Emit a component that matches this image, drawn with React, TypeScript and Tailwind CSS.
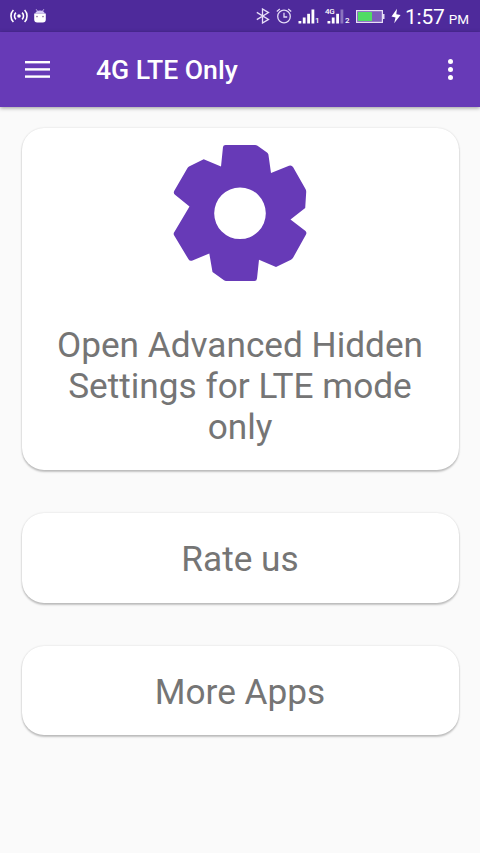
import React from "react";

const RadioIcon = () => (
  <svg width="18" height="14" viewBox="0 0 18 14" fill="none" stroke="#fff" strokeWidth="1.6">
    <circle cx="9" cy="7" r="1.8" fill="#fff" stroke="none" />
    <path d="M5.9 3.6a4.8 4.8 0 0 0 0 6.8M12.1 3.6a4.8 4.8 0 0 1 0 6.8" />
    <path d="M3.4 1a8.6 8.6 0 0 0 0 12M14.6 1a8.6 8.6 0 0 1 0 12" />
  </svg>
);

const RobotIcon = () => (
  <svg width="12" height="14" viewBox="0 0 12 14">
    <path d="M2.2.3l1.4 2M9.8.3l-1.4 2" stroke="#d9cdf3" strokeWidth="0.9" />
    <path d="M1.2 4.6C1.6 2.6 3.6 1.6 6 1.6s4.4 1 4.8 3z" fill="#d3c8f5" />
    <path d="M.2 4.6h11.6v6a3 3 0 0 1-3 3H3.2a3 3 0 0 1-3-3z" fill="#fff" />
    <circle cx="3" cy="7.6" r="0.8" fill="#8a6a9c" />
    <circle cx="9" cy="7.6" r="0.8" fill="#8a6a9c" />
  </svg>
);

const BluetoothIcon = () => (
  <svg width="14" height="16" viewBox="0 0 14 16" fill="none" stroke="#e6def7" strokeWidth="1.3">
    <path d="M.8 4.4l11.7 7L6.5 15V1l6 3.6-11.7 7" />
  </svg>
);

const AlarmIcon = () => (
  <svg width="16" height="16" viewBox="0 0 16 16" fill="none" stroke="#e2d9f5" strokeWidth="1.3">
    <circle cx="8" cy="8.5" r="6.3" />
    <path d="M8 4.8v4.2h3.2M.8 3.5L3.8 1M15.2 3.5L12.2 1" />
  </svg>
);

const SignalIcon = ({ weak }: { weak?: boolean }) => (
  <svg width="17" height="15" viewBox="0 0 17 15" fill="#fff">
    <rect x="0.5" y="12" width="2.8" height="2.5" />
    <rect x="4.8" y="8.5" width="2.8" height="6" />
    <rect x="9.2" y="4.8" width="2.8" height="9.7" />
    <rect x="13.5" y="0.5" width="2.8" height="14" opacity={weak ? 0.35 : 1} />
  </svg>
);

const BatteryIcon = () => (
  <svg width="29" height="13" viewBox="0 0 29 13">
    <rect x="0.6" y="0.6" width="25.8" height="11.8" fill="#7d5cbb" stroke="#e6def5" strokeWidth="1.2" />
    <rect x="2" y="2" width="14" height="9" fill="#4fdc64" />
    <rect x="26.5" y="4" width="2" height="5" fill="#e6def5" />
  </svg>
);

const BoltIcon = () => (
  <svg width="10" height="16" viewBox="0 0 10 16" fill="#fff">
    <path d="M6 .8L.5 8.6l4 .8L3.2 15.2 9.6 7l-4.3-.7z" />
  </svg>
);

const MenuIcon = () => (
  <svg width="25" height="19" viewBox="0 0 25 19" fill="#fff">
    <rect y="1" width="25" height="2.4" />
    <rect y="8.2" width="25" height="2.4" />
    <rect y="15.4" width="25" height="2.4" />
  </svg>
);

const StatusBar = () => (
  <div className="flex h-8 items-center bg-[#4e2a9b] text-white">
    <div className="flex items-center gap-[6px] pl-[9.5px]">
      <RadioIcon />
      <RobotIcon />
    </div>
    <div className="ml-auto flex items-center pr-[11px]">
      <BluetoothIcon />
      <div className="ml-[6px]">
        <AlarmIcon />
      </div>
      <div className="ml-[6px] flex items-end">
        <SignalIcon />
        <span className="w-[6px] text-[8px] font-medium leading-[7px]">1</span>
      </div>
      <div className="relative ml-[6px] flex items-end">
        <SignalIcon weak />
        <span className="ml-px w-[5px] text-[8px] font-medium leading-[7px]">2</span>
        <span className="absolute -left-[2px] -top-px text-[8px] font-medium leading-[8px] tracking-[-0.3px]">4G</span>
      </div>
      <div className="ml-[6px]">
        <BatteryIcon />
      </div>
      <div className="ml-[6px]">
        <BoltIcon />
      </div>
      <div className="ml-[4px] flex items-baseline gap-[4px] pt-[2px]">
        <span className="text-[21px] leading-none tracking-[-0.2px]">1:57</span>
        <span className="text-[13.5px] leading-none">PM</span>
      </div>
    </div>
  </div>
);

const AppBar = () => (
  <header className="relative flex h-[75px] items-center bg-[#673ab7] pl-[25px] pr-[27px] text-white shadow-[0_1px_4px_rgba(0,0,0,0.4)]">
    <button aria-label="Open menu">
      <MenuIcon />
    </button>
    <h1 className="ml-[46px] pt-[2px] text-[26.6px] font-medium leading-none">4G LTE Only</h1>
    <button aria-label="More options" className="ml-auto flex flex-col gap-[2.5px]">
      <span className="size-[5.5px] rounded-full bg-white" />
      <span className="size-[5.5px] rounded-full bg-white" />
      <span className="size-[5.5px] rounded-full bg-white" />
    </button>
  </header>
);

const GearIcon = () => (
  <svg width="160" height="160" viewBox="0 0 160 160" fill="#673ab7" fillRule="evenodd">
    <path d="M65.5 15H95q1.5 0 2.5.8L107 22.5q1.2.8 1.4 2L111 43l18-7.3q2.6-1 4 1.3l12.500 22q.8 1.300.7 3L145.200 78 130.500 89.500l15 11.500q1.500 1.500.5 3.500l-12.800 23q-.8 1.500-2.200 2.200L116 137l-17-7.200L97 148.500q-.3 2.500-2.500 2.500H66q-1 0-2-.7L52.500 142l-3.200-18.500L32.500 130.500q-2.600 1-4-1.200L14.200 105.500q-1.200-2.200.3-3.700L29.500 76.500 15 64.800q-2-1.600-.7-4L27.500 38q.7-1.200 2-1.800L43.700 29.300 61 36.500 63 17q.3-2 2.500-2zM80 57.500a25.800 25.800 0 1 0 0 51.600a25.800 25.800 0 1 0 0-51.600z" />
  </svg>
);

const Card = ({ children }: { children: React.ReactNode }) => (
  <button className="flex w-full flex-col items-center rounded-[22px] bg-white text-center text-[35.2px] leading-[41px] text-[#757575] shadow-[0_2px_2px_rgba(0,0,0,0.22),0_0_2px_rgba(0,0,0,0.15)]">
    {children}
  </button>
);

export default function App() {
  return (
    <div className="flex min-h-screen flex-col bg-[#fafafa] font-['Roboto',sans-serif]">
      <StatusBar />
      <AppBar />
      <main className="flex flex-col gap-[43px] px-[21.5px] pt-[21px]">
        <Card>
          <div className="pt-[2px]">
            <GearIcon />
          </div>
          <span className="px-6 pb-[22px] pt-[35px]">
            Open Advanced Hidden Settings for LTE mode only
          </span>
        </Card>
        <Card>
          <span className="pb-[22.5px] pt-[26px]">Rate us</span>
        </Card>
        <Card>
          <span className="pb-[22.5px] pt-[26px]">More Apps</span>
        </Card>
      </main>
    </div>
  );
}
